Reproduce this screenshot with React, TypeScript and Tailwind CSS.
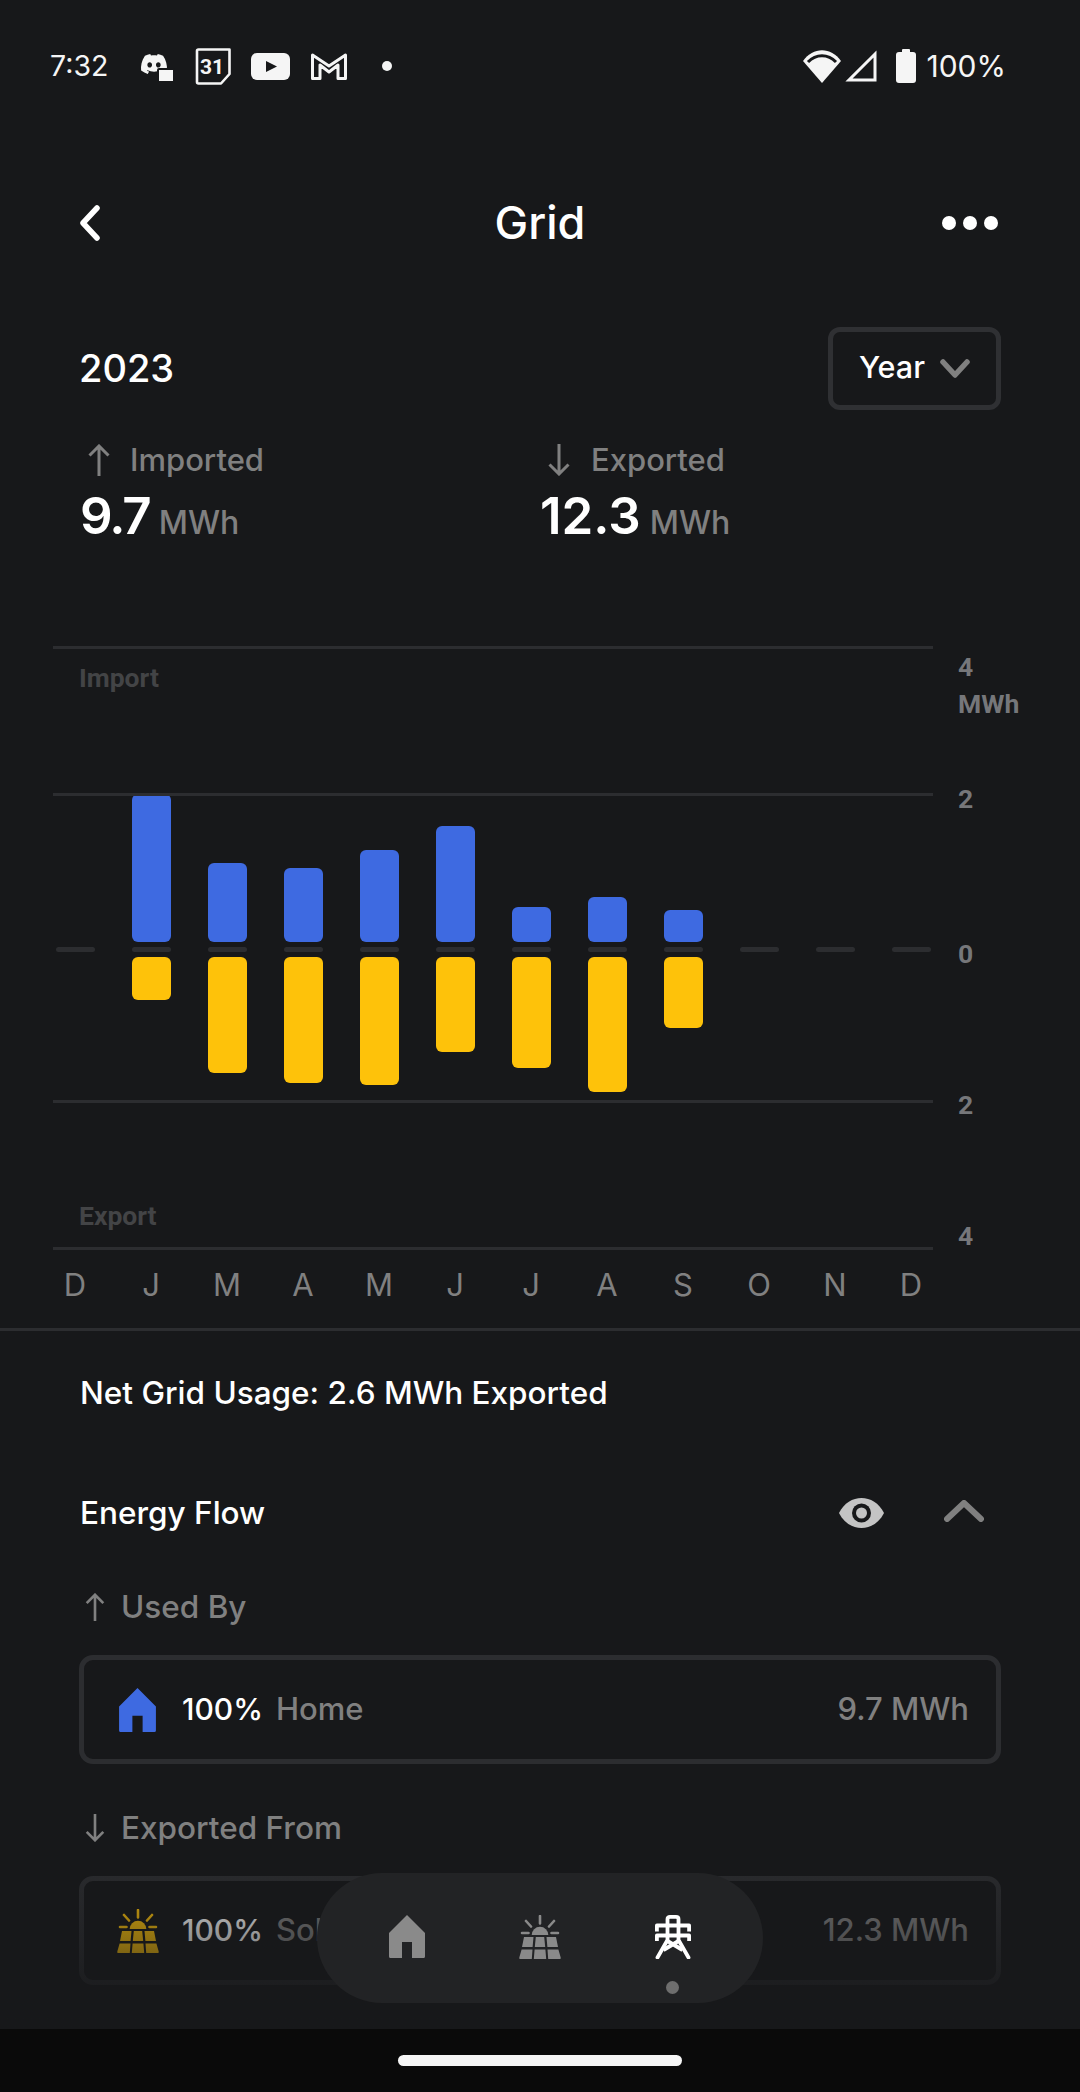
import { SiDiscord } from 'react-icons/si'

const months = ['D', 'J', 'M', 'A', 'M', 'J', 'J', 'A', 'S', 'O', 'N', 'D']

// px heights read off the chart, one per month
const imported = [0, 148, 79, 74, 92, 116, 35, 45, 32, 0, 0, 0]
const exported = [0, 43, 116, 126, 128, 95, 111, 135, 71, 0, 0, 0]

const gridLines = ['top-0', 'top-[147px]', 'top-[454px]', 'top-[601px]']

const axisLabels = [
  { text: '4', cls: 'top-[1px]' },
  { text: 'MWh', cls: 'top-[38px]' },
  { text: '2', cls: 'top-[133px]' },
  { text: '0', cls: 'top-[288px]' },
  { text: '2', cls: 'top-[439px]' },
  { text: '4', cls: 'top-[570px]' },
]

function HomeIcon({ className }: { className: string }) {
  return (
    <svg viewBox="0 0 36 43" className={className} fill="currentColor">
      <path d="M18 0 L36 18 V41.5 Q36 43 34.5 43 H23 V27 H13 V43 H1.5 Q0 43 0 41.5 V18 Z" />
    </svg>
  )
}

function SolarIcon({ className }: { className: string }) {
  return (
    <svg viewBox="0 0 42 44" className={className} fill="currentColor">
      <path d="M21 1 V8.5 M7 6 L12 11.5 M35 6 L30 11.5 M3 18 H9.5 M32.5 18 H39" stroke="currentColor" strokeWidth="2.6" strokeLinecap="round" />
      <path d="M12.7 20 A8.3 8.3 0 0 1 29.3 20 Z" />
      <path d="M5 22 H14.5 L13.6 32 H3 Z M16.8 22 H25.2 L26.2 32 H15.8 Z M27.5 22 H37 L39 32 H28.4 Z" />
      <path d="M2.6 34.5 H13.5 L12.8 44 H1 Q0 44 0.3 42.5 Z M15.6 34.5 H26.4 L27.2 44 H14.8 Z M28.5 34.5 H39.4 L41.7 42.5 Q42 44 41 44 H29.2 Z" />
    </svg>
  )
}

function TowerIcon({ className }: { className: string }) {
  return (
    <svg viewBox="0 0 36 44" className={className} fill="none" stroke="currentColor" strokeWidth="3.8" strokeLinejoin="round">
      <path d="M12.5 10 V4 Q12.5 1.9 15 1.9 H21 Q23.5 1.9 23.5 4 V10" />
      <path d="M1.9 16.5 V10.5 H34.1 V16.5" />
      <path d="M1.9 26 V20.5 H34.1 V26" />
      <path d="M12.5 10 V25 L2.5 42.5 M23.5 10 V25 L33.5 42.5" strokeLinecap="round" />
      <path d="M12.5 26 L27.5 35 M23.5 26 L8.5 35" />
    </svg>
  )
}

function ArrowUp({ className }: { className: string }) {
  return (
    <svg viewBox="0 0 22 32" className={className} fill="none" stroke="currentColor" strokeWidth="3">
      <path d="M11 32 V2 M1.5 11.5 L11 2 L20.5 11.5" />
    </svg>
  )
}

function ArrowDown({ className }: { className: string }) {
  return (
    <svg viewBox="0 0 22 32" className={className} fill="none" stroke="currentColor" strokeWidth="3">
      <path d="M11 0 V30 M1.5 20.5 L11 30 L20.5 20.5" />
    </svg>
  )
}

function StatusBar() {
  return (
    <div className="flex h-[132px] items-center justify-between pl-[50px] pr-[74px] text-[#f5f5f5]">
      <div className="flex items-center">
        <span className="text-[28.5px] w-[88px]">7:32</span>
        {/* discord + small chat bubble */}
        <div className="relative w-[35px] h-[30px] mr-[22px]">
          <SiDiscord className="w-[32px] h-[26px]" />
          <div className="absolute right-[-2px] bottom-[-2px] w-[14px] h-[11px] rounded-[2px] bg-[#f5f5f5] border-[2px] border-[#17181a] box-content" />
        </div>
        <svg viewBox="0 0 36 37" className="w-[36px] h-[37px] mr-[20px] overflow-visible" fill="none" stroke="#f5f5f5" strokeWidth="2.6">
          <path d="M2 3 Q2 1.5 3.5 1.5 H34.5 V26 L26 35.5 H3.5 Q2 35.5 2 34 Z" strokeLinejoin="round" />
          <text x="17" y="26" textAnchor="middle" fill="#f5f5f5" stroke="none" fontSize="21" fontWeight="700" fontFamily="Roboto, sans-serif">31</text>
        </svg>
        <svg viewBox="0 0 39 27" className="w-[39px] h-[27px] mr-[21px]">
          <rect width="39" height="27" rx="6" fill="#f5f5f5" />
          <path d="M15 8 L26 13.5 L15 19 Z" fill="#17181a" />
        </svg>
        <svg viewBox="0 0 36 28" className="w-[36px] h-[28px] mr-[35px]" fill="none" stroke="#f5f5f5" strokeWidth="3" strokeLinejoin="round">
          <path d="M1.5 3 L18 14 L34.5 3 V26.5 H27 V13 L18 20 L9 13 V26.5 H1.5 Z" />
        </svg>
        <div className="w-[10px] h-[10px] rounded-full bg-[#f5f5f5]" />
      </div>
      <div className="flex items-center">
        <svg viewBox="0 0 38 33" className="w-[38px] h-[33px] mr-[4px]">
          <path d="M0 11 C10 -3.5 28 -3.5 38 11 L19 33 Z" fill="#f5f5f5" />
          <path d="M5 12 C13 3.5 25 3.5 33 12" fill="none" stroke="#17181a" strokeWidth="3" />
        </svg>
        <svg viewBox="0 0 32 32" className="w-[32px] h-[32px] mr-[19px]" fill="none" stroke="#f5f5f5" strokeWidth="3">
          <path d="M30 4 V30 H4 Z" />
        </svg>
        <div className="flex flex-col items-center mr-[10px]">
          <div className="w-[8px] h-[3px] rounded-t-[1px] bg-[#f5f5f5]" />
          <div className="w-[20px] h-[31px] rounded-[3px] bg-[#f5f5f5]" />
        </div>
        <span className="text-[30px]">100%</span>
      </div>
    </div>
  )
}

function Chart() {
  return (
    <div className="relative h-[604px] mt-[108px] font-['Roboto',sans-serif] font-bold text-[26.5px]">
      {/* horizontal guides */}
      {gridLines.map((cls) => (
        <div key={cls} className={`absolute left-[53px] w-[880px] h-[3px] bg-[#2c2d30] ${cls}`} />
      ))}
      <span className="absolute left-[79px] top-[12px] text-[#434446]">Import</span>
      <span className="absolute left-[79px] top-[550px] text-[#434446]">Export</span>
      {axisLabels.map((label) => (
        <span key={label.cls} className={`absolute left-[958px] text-[#76777a] ${label.cls}`}>
          {label.text}
        </span>
      ))}

      {/* import bars, zero ticks, export bars */}
      <div className="ml-[37px] grid grid-cols-[repeat(12,76px)] pt-[148px]">
        {months.map((m, i) => (
          <div key={i} className="flex h-[148px] items-end justify-center">
            {imported[i] > 0 && <div className="w-[39px] rounded-[6px] bg-[#3e6ae1]" style={{ height: imported[i] }} />}
          </div>
        ))}
      </div>
      <div className="ml-[37px] grid grid-cols-[repeat(12,76px)] mt-[5px]">
        {months.map((m, i) => (
          <div key={i} className="flex justify-center">
            <div className="w-[39px] h-[5px] rounded-full bg-[#2c2d30]" />
          </div>
        ))}
      </div>
      <div className="ml-[37px] grid grid-cols-[repeat(12,76px)] mt-[5px]">
        {months.map((m, i) => (
          <div key={i} className="flex justify-center">
            {exported[i] > 0 && <div className="w-[39px] rounded-[6px] bg-[#fec20a]" style={{ height: exported[i] }} />}
          </div>
        ))}
      </div>
    </div>
  )
}

export default function App() {
  return (
    <div className="relative flex flex-col w-[1080px] h-[2092px] overflow-hidden bg-[#17181a] text-white font-['Inter',sans-serif]">
      <StatusBar />

      {/* Header */}
      <div className="grid grid-cols-3 h-[182px] items-center px-[80px]">
        <svg viewBox="0 0 22 36" className="w-[22px] h-[36px] -ml-[1px]" fill="none" stroke="white" strokeWidth="5.5" strokeLinecap="round" strokeLinejoin="round">
          <path d="M18 3 L4 18 L18 33" />
        </svg>
        <span className="text-[45px] font-medium text-center">Grid</span>
        <div className="flex justify-end gap-[7px] pr-[2px]">
          <div className="w-[14px] h-[14px] rounded-full bg-white" />
          <div className="w-[14px] h-[14px] rounded-full bg-white" />
          <div className="w-[14px] h-[14px] rounded-full bg-white" />
        </div>
      </div>

      {/* Period */}
      <div className="flex mt-[13px] items-center justify-between pl-[80px] pr-[79px]">
        <span className="text-[38px] font-medium -ml-[1px]">2023</span>
        <div className="flex w-[173px] h-[83px] items-center justify-center gap-[15px] pb-[4px] rounded-[12px] border-[5px] border-[#2f3033]">
          <span className="text-[30.5px] font-medium">Year</span>
          <svg viewBox="0 0 30 20" className="w-[30px] h-[20px] mt-[4px]" fill="none" stroke="#808080" strokeWidth="5.5" strokeLinecap="round" strokeLinejoin="round">
            <path d="M3 3 L15 16 L27 3" />
          </svg>
        </div>
      </div>

      {/* Totals */}
      <div className="grid grid-cols-[460px_1fr] mt-[30px] pl-[80px]">
        <div>
          <div className="flex h-[40px] items-center text-[#808080] text-[31px] font-medium pl-[8px]">
            <ArrowUp className="w-[22px] h-[32px] mr-[20px]" />
            Imported
          </div>
          <div className="flex h-[60px] -mt-[2px] items-baseline gap-[9px]">
            <span className="text-[51px] font-semibold tracking-[-2px]">9.7</span>
            <span className="text-[#808080] text-[32px] font-medium">MWh</span>
          </div>
        </div>
        <div>
          <div className="flex h-[40px] items-center text-[#808080] text-[31px] font-medium pl-[8px]">
            <ArrowDown className="w-[22px] h-[32px] mr-[21px]" />
            Exported
          </div>
          <div className="flex h-[60px] -mt-[2px] items-baseline gap-[9px]">
            <span className="text-[51px] font-semibold">12.3</span>
            <span className="text-[#808080] text-[32px] font-medium">MWh</span>
          </div>
        </div>
      </div>

      <Chart />

      <div className="ml-[37px] grid grid-cols-[repeat(12,76px)] h-[40px] mt-[12px] items-center text-center text-[#808080] text-[31px]">
        {months.map((m, i) => (
          <span key={i}>{m}</span>
        ))}
      </div>

      <div className="h-[3px] mt-[26px] bg-[#2c2d30]" />

      <div className="flex h-[40px] mt-[42px] items-center px-[80px] text-[31.5px] font-medium">
        Net Grid Usage: 2.6 MWh Exported
      </div>

      {/* Energy flow */}
      <div className="flex h-[40px] mt-[80px] items-center justify-between pl-[80px] pr-[96px]">
        <span className="text-[31.5px] font-medium">Energy Flow</span>
        <div className="flex items-center gap-[60px]">
          <svg viewBox="0 0 45 30" className="w-[45px] h-[30px]">
            <path d="M0 15 C10 -5 35 -5 45 15 C35 35 10 35 0 15 Z" fill="#c4c4c4" />
            <circle cx="22.5" cy="15" r="9.5" fill="#17181a" />
            <circle cx="22.5" cy="15" r="5.5" fill="#c4c4c4" />
          </svg>
          <svg viewBox="0 0 40 22" className="w-[40px] h-[22px] -mt-[5px]" fill="none" stroke="#808080" strokeWidth="6" strokeLinecap="round" strokeLinejoin="round">
            <path d="M3 19 L20 3 L37 19" />
          </svg>
        </div>
      </div>

      <div className="flex h-[40px] mt-[54px] items-center pl-[85px] text-[#808080] text-[31.5px] font-medium">
        <ArrowUp className="w-[20px] h-[28px] mr-[16px]" />
        Used By
      </div>
      <div className="flex h-[109px] mt-[28px] mx-[79px] items-center rounded-[14px] border-[5px] border-[#2c2d30] pl-[35px] pr-[27px] text-[31px] font-medium">
        <HomeIcon className="w-[37px] h-[44px] text-[#3e6ae1] mr-[26px]" />
        <span className="text-[30px] mr-[13px]">100%</span>
        <span className="text-[#808080]">Home</span>
        <span className="ml-auto text-[#808080]">9.7 MWh</span>
      </div>

      <div className="flex h-[40px] mt-[44px] items-center pl-[85px] text-[#808080] text-[31.5px] font-medium">
        <ArrowDown className="w-[20px] h-[28px] mr-[16px]" />
        Exported From
      </div>
      <div className="flex h-[109px] mt-[28px] mx-[79px] items-center rounded-[14px] border-[5px] border-[#2c2d30] pl-[33px] pr-[27px] text-[31px] font-medium">
        <SolarIcon className="w-[42px] h-[44px] text-[#fec20a] mr-[23px]" />
        <span className="text-[30px] mr-[13px]">100%</span>
        <span className="text-[#808080]">Solar</span>
        <span className="ml-auto text-[#808080]">12.3 MWh</span>
      </div>

      {/* fade under the floating nav */}
      <div className="absolute left-0 right-0 top-[1860px] h-[169px] bg-gradient-to-b from-[#17181a]/10 via-[#17181a]/50 to-[#17181a]" />

      {/* Floating nav */}
      <div className="absolute left-[317px] top-[1873px] flex w-[446px] h-[130px] items-start justify-center gap-[94px] pt-[42px] rounded-[65px] bg-[#222325]">
        <HomeIcon className="w-[36px] h-[43px] text-[#8a8a8a]" />
        <SolarIcon className="w-[42px] h-[44px] text-[#8a8a8a]" />
        <div className="relative">
          <TowerIcon className="w-[36px] h-[44px] text-white" />
          <div className="absolute left-[11px] top-[66px] w-[13px] h-[13px] rounded-full bg-[#6e6e6e]" />
        </div>
      </div>

      {/* Gesture bar */}
      <div className="absolute left-0 right-0 top-[2029px] flex h-[63px] justify-center pt-[26px] bg-[#0a0a0a]">
        <div className="w-[284px] h-[11px] rounded-full bg-[#f5f5f5]" />
      </div>
    </div>
  )
}
